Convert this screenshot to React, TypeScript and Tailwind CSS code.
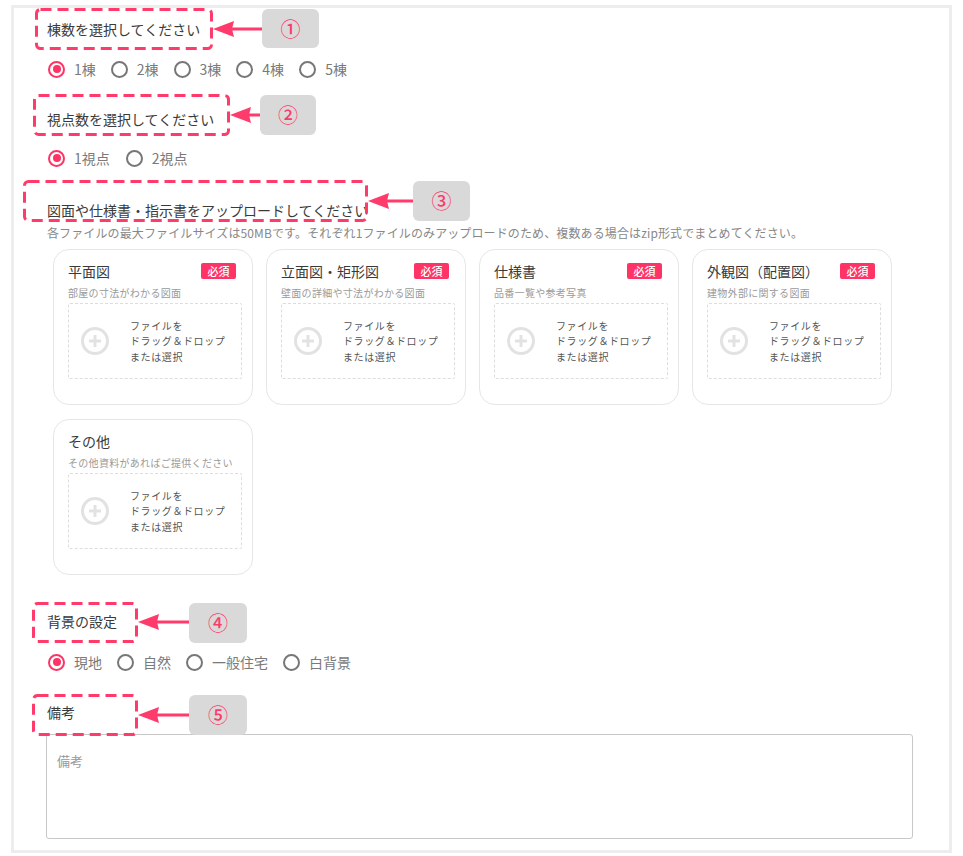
import React from "react";

const PINK = "#ff3b6b";

type Box = { x: number; y: number; w: number; h: number };

function Annotation({ box, tag, num, arrowY }: { box: Box; tag: Box; num: string; arrowY: number }) {
  const ax = box.x + box.w;
  const aw = tag.x - ax;
  return (
    <>
      <svg
        className="absolute pointer-events-none"
        style={{ left: box.x, top: box.y, width: box.w, height: box.h }}
        width={box.w}
        height={box.h}
      >
        <rect
          x={1.5}
          y={1.5}
          width={box.w - 3}
          height={box.h - 3}
          rx={4}
          fill="none"
          stroke={PINK}
          strokeWidth={3}
          strokeDasharray="11 6"
        />
      </svg>
      <svg
        className="absolute pointer-events-none"
        style={{ left: ax, top: arrowY - 10, width: aw, height: 20 }}
        width={aw}
        height={20}
      >
        <line x1={16} y1={10} x2={aw} y2={10} stroke={PINK} strokeWidth={3} />
        <polygon points={`0,10 21,2 19,10 21,18`} fill={PINK} />
      </svg>
      <div
        className="absolute flex items-center justify-center rounded-[6px] bg-[#d9d9d9] text-[20px] font-medium text-[#ff3b6b] leading-none"
        style={{ left: tag.x, top: tag.y, width: tag.w, height: tag.h }}
      >
        {num}
      </div>
    </>
  );
}

function Radio({ label, checked }: { label: string; checked?: boolean }) {
  return (
    <div className="flex items-center">
      <span
        className={
          checked
            ? "flex h-[17px] w-[17px] items-center justify-center rounded-full border-2 border-[#ff3366]"
            : "flex h-[17px] w-[17px] items-center justify-center rounded-full border-2 border-[#777777]"
        }
      >
        {checked && <span className="h-[8px] w-[8px] rounded-full bg-[#ff3366]" />}
      </span>
      <span className="ml-[9px] text-[14px] leading-[20px] text-[#7a7a7a]">{label}</span>
    </div>
  );
}

function PlusIcon() {
  return (
    <svg width="28" height="28" viewBox="0 0 28 28" className="shrink-0">
      <circle cx="14" cy="14" r="12.5" fill="none" stroke="#e2e2e2" strokeWidth="3" />
      <line x1="8" y1="14" x2="20" y2="14" stroke="#e2e2e2" strokeWidth="3" />
      <line x1="14" y1="8" x2="14" y2="20" stroke="#e2e2e2" strokeWidth="3" />
    </svg>
  );
}

function Card({ title, sub, required }: { title: string; sub: string; required?: boolean }) {
  return (
    <div className="flex h-[156px] w-[200px] flex-col rounded-[16px] border border-[#e6e6e6] pl-[14px] pr-[10px] pt-[11px]">
      <div className="flex h-[20px] items-center justify-between pr-[6px]">
        <span className="text-[14px] leading-[20px] text-[#3a3a3a]">{title}</span>
        {required && (
          <span className="flex h-[16px] w-[35px] items-center justify-center rounded-[2px] bg-[#ff3366] text-[11px] font-medium leading-none text-white">
            必須
          </span>
        )}
      </div>
      <div className="mt-[5px] h-[14px] whitespace-nowrap text-[10px] leading-[14px] tracking-[0.03em] text-[#9a9a9a]">
        {sub}
      </div>
      <div className="mt-[3px] flex h-[76px] w-[174px] items-center rounded-[2px] border border-dashed border-[#dddddd] pl-[12px]">
        <PlusIcon />
        <div className="ml-[21px] text-[10px] leading-[15.5px] tracking-[0.06em] text-[#555555]">
          <div>ファイルを</div>
          <div>ドラッグ＆ドロップ</div>
          <div>または選択</div>
        </div>
      </div>
    </div>
  );
}

export default function App() {
  return (
    <div
      className="relative h-[856px] w-[963px] bg-white pl-[11px] pt-[5px]"
      style={{ fontFamily: '"Noto Sans CJK JP", "Noto Sans", sans-serif' }}
    >
      <div className="flex h-[848px] w-[941px] flex-col border-[3px] border-[#ededed] pl-[32px]">
        <div className="ml-px mt-[11px] h-[20px] text-[14px] leading-[20px] text-[#3a3a3a]">棟数を選択してください</div>
        <div className="mt-[20px] flex h-[20px] items-center gap-[15px] pl-[2px]">
          <Radio label="1棟" checked />
          <Radio label="2棟" />
          <Radio label="3棟" />
          <Radio label="4棟" />
          <Radio label="5棟" />
        </div>

        <div className="ml-px mt-[30px] h-[20px] text-[14px] leading-[20px] text-[#3a3a3a]">視点数を選択してください</div>
        <div className="mt-[19px] flex h-[20px] items-center gap-[16px] pl-[2px]">
          <Radio label="1視点" checked />
          <Radio label="2視点" />
        </div>

        <div className="ml-px mt-[32px] h-[20px] text-[14px] leading-[20px] text-[#3a3a3a]">
          図面や仕様書・指示書をアップロードしてください
        </div>
        <div className="ml-px mt-[5px] h-[16px] whitespace-nowrap text-[12px] leading-[16px] tracking-[0.01em] text-[#888888]">
          各ファイルの最大ファイルサイズは50MBです。それぞれ1ファイルのみアップロードのため、複数ある場合はzip形式でまとめてください。
        </div>

        <div className="ml-[7px] mt-[8px] grid grid-cols-[repeat(4,200px)] gap-[13px] gap-y-[14px]">
          <Card title="平面図" sub="部屋の寸法がわかる図面" required />
          <Card title="立面図・矩形図" sub="壁面の詳細や寸法がわかる図面" required />
          <Card title="仕様書" sub="品番一覧や参考写真" required />
          <Card title="外観図（配置図）" sub="建物外部に関する図面" required />
          <Card title="その他" sub="その他資料があればご提供ください" />
        </div>

        <div className="ml-px mt-[36px] h-[20px] text-[14px] leading-[20px] text-[#3a3a3a]">背景の設定</div>
        <div className="mt-[21px] flex h-[20px] items-center gap-[15px] pl-[2px]">
          <Radio label="現地" checked />
          <Radio label="自然" />
          <Radio label="一般住宅" />
          <Radio label="白背景" />
        </div>

        <div className="ml-px mt-[30px] h-[20px] text-[14px] leading-[20px] text-[#3a3a3a]">備考</div>
        <textarea
          placeholder="備考"
          className="mt-[12px] h-[105px] w-[867px] resize-none rounded-[3px] border border-[#c8c8c8] px-[10px] pt-[16px] text-[13px] leading-[20px] text-[#333333] outline-none placeholder:text-[#999999]"
          style={{ fontFamily: '"Noto Sans CJK JP", "Noto Sans", sans-serif' }}
        />
      </div>

      <Annotation box={{ x: 35, y: 8, w: 178, h: 42 }} tag={{ x: 262, y: 9, w: 57, h: 39 }} num="①" arrowY={29} />
      <Annotation box={{ x: 33, y: 94, w: 197, h: 42 }} tag={{ x: 260, y: 95, w: 56, h: 40 }} num="②" arrowY={115} />
      <Annotation box={{ x: 23, y: 180, w: 345, h: 42 }} tag={{ x: 413, y: 181, w: 57, h: 40 }} num="③" arrowY={201} />
      <Annotation box={{ x: 32, y: 602, w: 106, h: 41 }} tag={{ x: 189, y: 603, w: 58, h: 40 }} num="④" arrowY={622} />
      <Annotation box={{ x: 32, y: 694, w: 106, h: 42 }} tag={{ x: 189, y: 695, w: 58, h: 40 }} num="⑤" arrowY={715} />
    </div>
  );
}
